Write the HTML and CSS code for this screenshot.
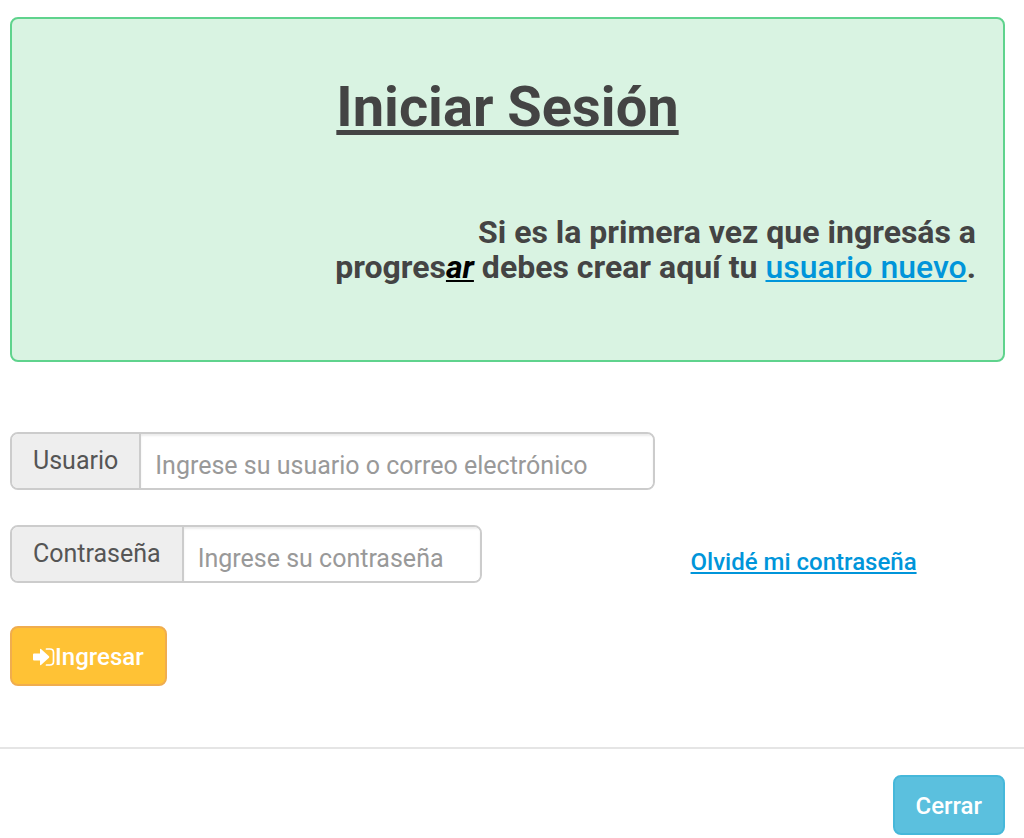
FILE: index.html
```html
<!DOCTYPE html>
<html lang="es">
<head>
<meta charset="utf-8">
<meta name="viewport" content="width=device-width, initial-scale=1">
<title>Iniciar Sesión</title>
<link rel="stylesheet" href="styles.css">
</head>
<body>
<main class="content">
  <section class="notice">
    <h1 class="title">Iniciar Sesión</h1>
    <p class="lead">Si es la primera vez que ingresás a<br>progres<em class="brand">ar</em> debes crear aquí tu <a class="link" href="#">usuario nuevo</a>.</p>
  </section>
  <form class="login">
    <div class="group group-user">
      <label class="addon" for="usuario">Usuario</label>
      <input class="field" id="usuario" type="text" placeholder="Ingrese su usuario o correo electrónico">
    </div>
    <div class="row">
      <div class="group group-pass">
        <label class="addon" for="clave">Contraseña</label>
        <input class="field" id="clave" type="password" placeholder="Ingrese su contraseña">
      </div>
      <a class="link forgot" href="#">Olvidé mi contraseña</a>
    </div>
    <button class="btn btn-primary" type="button"><svg class="icon" viewBox="0 0 22 20" aria-hidden="true"><path d="M1 6.500h6V2.500q0-1.300 1-.5l8 7.300q.6.700 0 1.400l-8 7.300q-1 .8-1-.5v-4H1q-1 0-1-1v-5q0-1 1-1z" fill="currentColor"/><path d="M13.500 2h3.500q3.500 0 3.500 3.500v9q0 3.500-3.500 3.500H13.500" fill="none" stroke="currentColor" stroke-width="1.700" stroke-linecap="round"/></svg>Ingresar</button>
  </form>
</main>
<footer class="footer">
  <button class="btn btn-info" type="button">Cerrar</button>
</footer>
</body>
</html>
```
FILE: styles.css
```css
* {
  box-sizing: border-box;
}

body {
  margin: 0;
  background: #fff;
  color: #444;
  font-family: Roboto, "Liberation Sans", sans-serif;
  font-size: 25px;
  line-height: 36px;
}

.content {
  padding: 17px 19px 61px 10px;
}

.notice {
  padding: 56px 27px 75px;
  border: 2px solid #5fd38d;
  border-radius: 8px;
  background: #d9f3e2;
  font-weight: 700;
}

.title {
  margin: 0 0 76px;
  font-size: 56px;
  line-height: 64px;
  text-align: center;
  text-decoration: underline;
  text-decoration-thickness: 5px;
  text-underline-offset: 4px;
  text-decoration-skip-ink: none;
}

.lead {
  margin: 0;
  font-size: 32px;
  line-height: 35px;
  text-align: right;
}

.brand {
  color: #000;
  text-decoration: underline;
  text-decoration-thickness: 2px;
  text-underline-offset: 2px;
}

.link {
  color: #0095da;
  font-weight: 500;
  text-decoration: underline;
  text-decoration-thickness: 2px;
  text-underline-offset: 2px;
  text-decoration-skip-ink: none;
}

.login {
  display: flex;
  flex-direction: column;
  align-items: flex-start;
  margin-top: 70px;
}

.group {
  display: flex;
  height: 58px;
  border: 2px solid #ccc;
  border-radius: 8px;
  overflow: hidden;
}

.group:focus-within {
  border-color: #66afe9;
}

.group-user {
  width: 64.8%;
  margin-bottom: 35px;
}

.group-pass {
  flex: 0 0 auto;
  width: 47.4%;
  min-width: 0;
}

.row {
  display: flex;
  align-items: center;
  width: 100%;
  margin-bottom: 43px;
}

.addon {
  padding: 9px 21px 0;
  border-right: 2px solid #ccc;
  background: #eee;
  color: #555;
}

.field {
  flex: 1;
  min-width: 0;
  padding: 10px 14px 0;
  border: 0;
  outline: 0;
  background: #fff;
  box-shadow: inset 0 2px 2px rgba(0, 0, 0, 0.08);
  color: #555;
  font: inherit;
}

.field::placeholder {
  color: #999;
  opacity: 1;
}

.forgot {
  margin: 16px 0 0 21%;
  font-size: 24px;
}

.btn {
  display: inline-flex;
  align-items: center;
  height: 60px;
  padding: 2px 21px 0;
  border: 2px solid;
  border-radius: 8px;
  color: #fff;
  font: inherit;
  font-size: 24px;
  font-weight: 500;
  cursor: pointer;
}

.btn-primary {
  border-color: #f0ad4e;
  background: #ffc235;
}

.btn-info {
  border-color: #46b8da;
  background: #5bc0de;
}

.icon {
  width: 22px;
  height: 20px;
}

.footer {
  display: flex;
  justify-content: flex-end;
  padding: 26px 19px 4px;
  border-top: 2px solid #e5e5e5;
}
```
